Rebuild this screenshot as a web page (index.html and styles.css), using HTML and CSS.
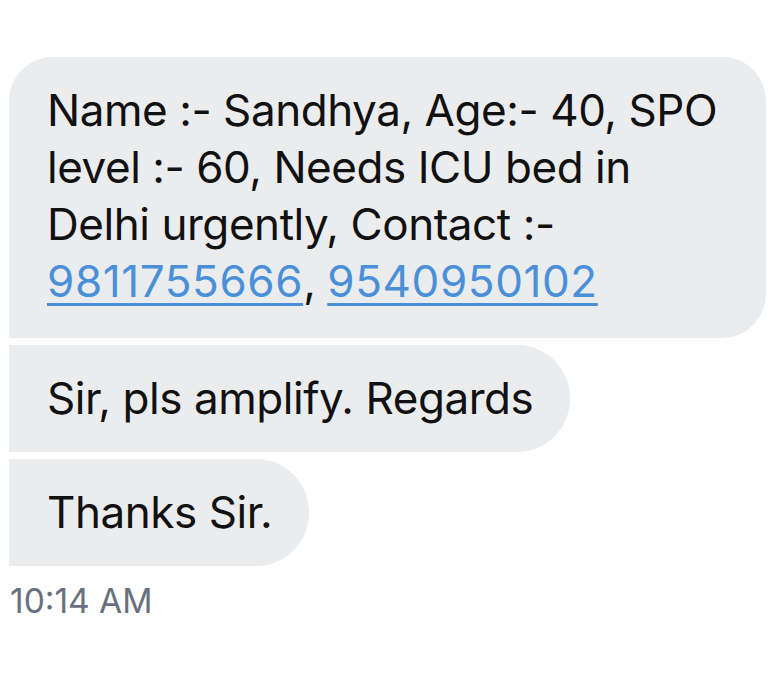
FILE: index.html
```html
<!DOCTYPE html>
<html>
<head>
<meta charset="utf-8">
<link rel="stylesheet" href="styles.css">
</head>
<body>
<div class="thread">
  <div class="bubble first">Name :- Sandhya, Age:- 40, SPO<br>level :- 60, Needs ICU bed in<br>Delhi urgently, Contact :-<br><a href="#" class="link">9811755666</a>, <a href="#" class="link">9540950102</a></div>
  <div class="bubble">Sir, pls amplify. Regards</div>
  <div class="bubble">Thanks Sir.</div>
  <div class="time">10:14 AM</div>
</div>
</body>
</html>
```
FILE: styles.css
```css
html, body {
  margin: 0;
  padding: 0;
  background: #ffffff;
}
.thread {
  display: flex;
  flex-direction: column;
  align-items: flex-start;
  gap: 7px;
  padding: 57px 0 0 9px;
  font-family: Inter, "Noto Sans", sans-serif;
}
.bubble {
  background: #ebecee;
  color: #111111;
  font-size: 44px;
  line-height: 57px;
  letter-spacing: -0.45px;
  padding: 25px 37px 25px 38px;
  border-radius: 0 53px 53px 0;
  white-space: nowrap;
}
.bubble.first {
  width: 682px;
  padding-bottom: 28px;
  border-radius: 44px 44px 44px 0;
}
.link {
  color: #4a90d9;
  letter-spacing: 0.6px;
  text-decoration: underline;
  text-decoration-thickness: 3px;
  text-underline-offset: 6px;
}
.time {
  margin-top: 8px;
  margin-left: 1px;
  font-size: 33.5px;
  color: #67717e;
}
```
